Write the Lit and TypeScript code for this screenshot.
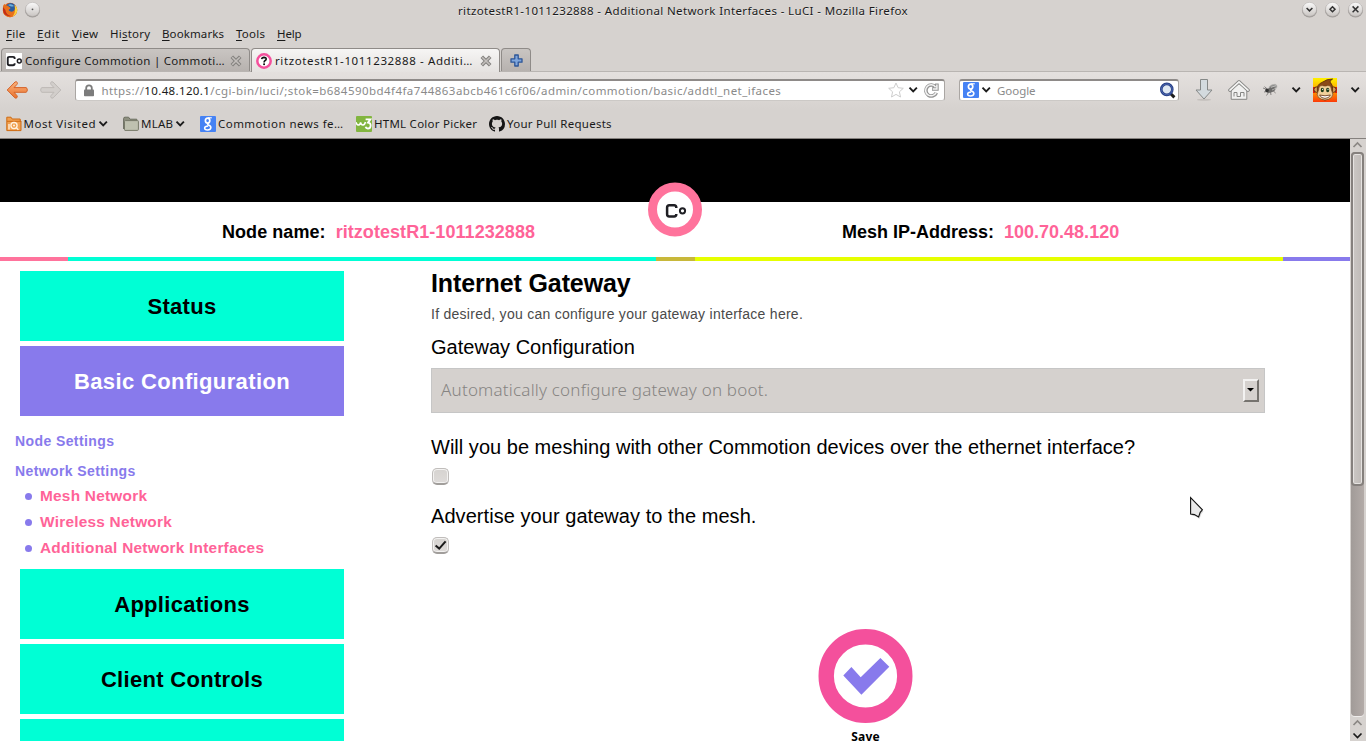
import { LitElement, html, css, svg } from "lit";
import { customElement } from "lit/decorators.js";

interface MenuEntry { before: string; key: string; after: string; width: number; spacing: number; }

const MENU: MenuEntry[] = [
  { before: "", key: "F", after: "ile", width: 31, spacing: 0.27 },
  { before: "", key: "E", after: "dit", width: 35, spacing: 0.6 },
  { before: "", key: "V", after: "iew", width: 38, spacing: 0.29 },
  { before: "Hi", key: "s", after: "tory", width: 52, spacing: 0.24 },
  { before: "", key: "B", after: "ookmarks", width: 74, spacing: 0.11 },
  { before: "", key: "T", after: "ools", width: 41, spacing: 0.26 },
  { before: "", key: "H", after: "elp", width: 30, spacing: -0.15 },
];

const chevron = html`<svg class="chev" width="11" height="8" viewBox="0 0 11 8">
  <path d="M1.5 1.7 L5.2 5.4 L8.9 1.7" fill="none" stroke="#1c1c1c" stroke-width="1.9"/></svg>`;

const closeX = html`<svg width="12" height="12" viewBox="0 0 12 12">
  <path d="M1.8 1.8 L10.2 10.2 M10.2 1.8 L1.8 10.2" stroke="#83817e" stroke-width="3.6"/>
  <path d="M2.2 2.2 L9.8 9.8 M9.8 2.2 L2.2 9.8" stroke="#c3bfbc" stroke-width="1.6"/></svg>`;

const logoMark = svg`
  <path d="M10.6 4.1 V3.6 Q10.6 1.4 8.4 1.4 H3.6 Q1.4 1.4 1.4 3.6 V10.4 Q1.4 12.6 3.6 12.6 H8.4 Q10.6 12.6 10.6 10.4 V10"
    fill="none" stroke="#1f1f24" stroke-width="2.5"/>
  <circle cx="16.8" cy="6.9" r="2.6" fill="none" stroke="#1f1f24" stroke-width="2"/>`;

const googleIcon = html`<svg width="16" height="16" viewBox="0 0 16 16">
  <rect width="16" height="16" rx="1" fill="#4582f4"/>
  <g fill="none" stroke="#fff">
    <ellipse cx="7.6" cy="4.6" rx="2.2" ry="2.5" stroke-width="1.7"/>
    <path d="M8 1.8 H11.8" stroke-width="1.1"/>
    <path d="M9 6.9 Q7 7.8 8 8.7 Q11 9.8 10.9 11.7 Q10.6 14 7.6 14 Q4.6 13.9 4.6 12 Q4.8 10 8.2 9.9" stroke-width="1.5"/>
  </g></svg>`;

const firefoxIcon = html`<svg width="16" height="17" viewBox="0 -1 16 17">
  <circle cx="8" cy="8" r="7.2" fill="#e2601a"/>
  <circle cx="8.8" cy="6.2" r="5.2" fill="#2b5e9e"/>
  <path d="M6 3 Q9 1 12 4 Q10 5 8 4 Z" fill="#6fb0dc"/>
  <path d="M1 4 L2.4 1.8 L3.4 3.6 Q6 3.4 7.2 5 Q9 5.4 8.2 6.8 Q6.4 7.2 6.8 8.6 Q9 10.6 11.6 9 Q13.6 7 12.6 3 Q16 6 15 10 Q13 15 8 15.2 Q2 15 0.9 9 Z" fill="#e8701c"/>
  <path d="M12.6 3 Q16 6 15 10 Q13.6 13.6 10.6 14.6 Q14 10.6 12.6 3 Z" fill="#fbd23c"/>
  <path d="M1 5 Q0.4 10 3 12.6 Q6 15 9 14 Q4 13 3.4 8 Z" fill="#c22e18"/></svg>`;

const roundButton = (glyph: unknown) => html`<svg width="17" height="17" viewBox="0 0 17 17">
  <defs><linearGradient id="rb" x1="0" y1="0" x2="0" y2="1">
    <stop offset="0" stop-color="#fafafa"/><stop offset="1" stop-color="#c9c5c2"/></linearGradient></defs>
  <circle cx="8.5" cy="9" r="7.6" fill="#8c8886" opacity=".75"/>
  <circle cx="8.5" cy="8.3" r="7" fill="url(#rb)" stroke="#b5b1ae" stroke-width=".5"/>${glyph}</svg>`;

@customElement("browser-chrome")
export class BrowserChrome extends LitElement {
  static styles = css`
    :host {
      display: block; height: 139px; box-sizing: border-box; background: #d6d2cf;
      font-family: "Noto Sans", sans-serif; font-size: 11.5px; color: #1a1a1a;
      border-bottom: 1px solid #85817e; white-space: nowrap;
    }
    svg { display: block; flex: none; }
    .title { display: grid; grid-template-columns: 1fr auto 1fr; height: 21px; line-height: 21px; }
    .title-left { display: flex; gap: 6px; padding: 1px 0 0 2px; align-items: flex-start; }
    .title-text { letter-spacing: .375px; text-shadow: 0 1px 0 #eceae8; }
    .title-right { display: flex; justify-content: flex-end; gap: 6px; padding: 1px 2px 0 0; }
    .menu { display: flex; height: 25px; line-height: 25px; padding: 0 0 2px 6px; }
    .menu u { text-underline-offset: 2px; text-decoration-thickness: 1px; }
    .tabs { display: flex; height: 23px; align-items: stretch; padding-left: 1px; border-bottom: 1px solid #b9b5b2; }
    .tab {
      display: flex; align-items: center; box-sizing: border-box; height: 23px; width: 249px;
      border: 1px solid #8f8b88; border-width: 1px 1.5px 0 1.5px; border-radius: 4px 4px 0 0;
      background: linear-gradient(#c9c5c2, #b7b2af); padding: 1px 7px 0 4px; line-height: 22px;
    }
    .tab.active { background: linear-gradient(#f6f5f4, #e5e2e0); height: 24px; margin-left: 1px; }
    .tab .label { flex: 1; margin-left: 3px; letter-spacing: .28px; }
    .tab.active .label { letter-spacing: .62px; }
    .tab.add { width: 30px; justify-content: center; padding: 0; margin-left: 1px; }
    .tools {
      display: flex; align-items: center; box-sizing: border-box; height: 37px; padding: 0 5px 2px 6px;
      background: linear-gradient(#e4e0de, #d6d2cf);
    }
    .tools > * { margin-left: var(--gap, 0); }
    .g11 { --gap: 11px; } .g12 { --gap: 12px; } .g13 { --gap: 13px; } .g14 { --gap: 14px; } .g15 { --gap: 15px; }
    .field {
      display: flex; align-items: center; box-sizing: border-box; height: 22px; background: #fff; flex: none;
      border: 1px solid #aaa6a3; border-top: 2px solid #8e8a88; border-bottom-color: #ccc9c6;
      border-radius: 3px; color: #8a8a8a; line-height: 19px;
    }
    .url { width: 870px; padding: 0 3px 0 8px; }
    .url .addr { flex: 1; margin-left: 7.5px; letter-spacing: .445px; }
    .url .scheme { letter-spacing: .4px; }
    .url .host { color: #1a1a1a; letter-spacing: .36px; }
    .url .star { margin-right: 4px; } .url .reload { margin-left: 4px; }
    .url .star { margin-left: -1px; }
    .search { width: 220px; padding: 0 2px 0 3px; }
    .search .chev { margin-left: 2px; }
    .search .ph { flex: 1; margin-left: 5px; letter-spacing: -.05px; }
    .marks { display: flex; height: 29px; align-items: center; padding-left: 6px; line-height: 29px; }
    .mark { display: flex; align-items: center; }
    .mark .text { margin: 0 2px 0 2px; }
    .m1 { width: 117px; } .m1 .text { letter-spacing: .54px; margin-left: 1.5px; }
    .m2 { width: 77px; } .m2 .text { letter-spacing: .23px; margin-left: 2px; }
    .m3 { width: 156px; } .m3 .text { letter-spacing: .46px; }
    .m4 { width: 133px; } .m4 .text { letter-spacing: .25px; }
    .m5 .text { letter-spacing: .26px; }
  `;

  private folder(visited: boolean) {
    return visited
      ? html`<svg width="16" height="16" viewBox="0 0 16 16">
          <path d="M.8 14.6 V1.2 H5 L6.2 3 H14.2 V5 H15 V14.6 Z" fill="#f0a050" stroke="#cf6a12"/>
          <path d="M1 5.3 H15" stroke="#cf6a12"/>
          <circle cx="8" cy="9.6" r="3.1" fill="none" stroke="#fff3e2" stroke-width="1.3"/>
          <circle cx="8" cy="9.6" r="1" fill="#fff3e2"/>
          <path d="M10.2 11.6 L12.4 13.8 M3 13.5 V8" stroke="#fff3e2" stroke-width="1.3"/></svg>`
      : html`<svg width="16" height="16" viewBox="0 0 16 16">
          <path d="M.6 13 V2.6 Q.6 1.2 2 1.2 H5.6 L7 3.2 H13.8 V5" fill="#8e9080" stroke="#6c6e60"/>
          <path d="M2 14.4 Q1.5 14.4 1.5 13.6 V5.4 Q1.5 4.6 2.4 4.6 H14.6 Q15.4 4.6 15.4 5.4 V13.4 Q15.4 14.4 14.4 14.4 Z" fill="#bfc1b0" stroke="#777969"/></svg>`;
  }

  render() {
    return html`
      <div class="title">
        <div class="title-left">${firefoxIcon}${roundButton(svg`<circle cx="8.5" cy="8.3" r=".9" fill="#555"/>`)}</div>
        <div class="title-text">ritzotestR1-1011232888 - Additional Network Interfaces - LuCI - Mozilla Firefox</div>
        <div class="title-right">
          ${roundButton(svg`<path d="M5.6 7 L8.5 9.9 L11.4 7" fill="none" stroke="#333" stroke-width="1.5"/>`)}
          ${roundButton(svg`<path d="M8.5 5.8 L11 8.3 L8.5 10.8 L6 8.3 Z" fill="none" stroke="#333" stroke-width="1.5"/>`)}
          ${roundButton(svg`<path d="M5.6 5.4 L11.4 11.2 M11.4 5.4 L5.6 11.2" stroke="#333" stroke-width="1.5"/>`)}
        </div>
      </div>
      <div class="menu">
        ${MENU.map((m) => html`<span style="width:${m.width}px;letter-spacing:${m.spacing}px">${m.before}<u>${m.key}</u>${m.after}</span>`)}
      </div>
      <div class="tabs">
        <div class="tab">
          <svg width="16" height="16" viewBox="0 0 16 16"><rect width="16" height="16" fill="#fff"/>
            <g transform="translate(.7 2.8) scale(.75 .75)">${logoMark}</g></svg>
          <span class="label">Configure Commotion | Commoti…</span>${closeX}
        </div>
        <div class="tab active">
          <svg width="16" height="16" viewBox="0 0 16 16"><circle cx="8" cy="8" r="6.7" fill="#fff" stroke="#f4509c" stroke-width="2.5"/>
            <path d="M5.7 6.2 Q5.9 4.4 8 4.4 Q10.3 4.5 10.2 6.2 Q10.1 7.2 8.9 7.8 Q8.1 8.3 8.1 9.4" fill="none" stroke="#111" stroke-width="1.6"/>
            <rect x="7.2" y="10.4" width="1.8" height="1.7" fill="#111"/></svg>
          <span class="label">ritzotestR1-1011232888 - Additi…</span>${closeX}
        </div>
        <div class="tab add">
          <svg width="13" height="13" viewBox="0 0 13 13">
            <path d="M4.8 1 H8.2 V4.8 H12 V8.2 H8.2 V12 H4.8 V8.2 H1 V4.8 H4.8 Z" fill="#7fa6dc" stroke="#2d5597" stroke-width="1.3" stroke-linejoin="round"/></svg>
        </div>
      </div>
      <div class="tools">
        <svg width="22" height="20" viewBox="0 0 22 20">
          <defs><linearGradient id="bk" x1="0" y1="0" x2="0" y2="1"><stop offset="0" stop-color="#fbb27c"/><stop offset="1" stop-color="#e9722d"/></linearGradient></defs>
          <path d="M1.2 10 L9 2 Q10.4 1.2 11.2 2.4 Q11.8 3.6 10.8 4.6 L8 7.6 H20 Q21.3 7.8 21.3 10 Q21.3 12 20 12.3 H8 L10.8 15.4 Q11.8 16.4 11 17.6 Q10 18.7 8.8 17.8 Z" fill="url(#bk)" stroke="#d4632a" stroke-linejoin="round"/></svg>
        <svg class="g12" width="22" height="20" viewBox="0 0 22 20">
          <path d="M20.8 10 L13 2 Q11.6 1.2 10.8 2.4 Q10.2 3.6 11.2 4.6 L14 7.6 H2 Q.7 7.8 .7 10 Q.7 12 2 12.3 H14 L11.2 15.4 Q10.2 16.4 11 17.6 Q12 18.7 13.2 17.8 Z" fill="#d2cecb" stroke="#bdb9b6" stroke-linejoin="round"/></svg>
        <div class="field url g13">
          <svg width="10" height="13" viewBox="0 0 10 13">
            <path d="M2.2 7 V4 Q2.2 1.3 5 1.3 Q7.8 1.3 7.8 4 V7" fill="none" stroke="#7c7c7c" stroke-width="1.8"/>
            <rect x="0" y="5.6" width="10" height="6.6" rx=".8" fill="#7c7c7c"/></svg>
          <span class="addr"><span class="scheme">https://</span><span class="host">10.48.120.1</span>/cgi-bin/luci/;stok=b684590bd4f4fa744863abcb461c6f06/admin/commotion/basic/addtl_net_ifaces</span>
          <svg class="star" width="16" height="16" viewBox="0 0 16 16">
            <path d="M8 1 L10.1 5.7 L15.3 6.3 L11.4 9.8 L12.5 15 L8 12.4 L3.5 15 L4.6 9.8 L.7 6.3 L5.9 5.7 Z" fill="#fff" stroke="#cdcdcd"/></svg>
          ${chevron}
          <svg class="reload" width="18" height="17" viewBox="0 0 18 17">
            <g fill="none"><path d="M12.6 5 A5.5 5.5 0 1 0 13.4 10.8 M9 7 H13.9 V1.6" stroke="#949494" stroke-width="3.6"/>
            <path d="M12.6 5.2 A5.5 5.5 0 1 0 13.1 10.6 M9.7 7 H13.9 V2.4" stroke="#f4f4f4" stroke-width="1.5"/></g></svg>
        </div>
        <div class="field search g14">
          ${googleIcon}${chevron}<span class="ph">Google</span>
          <svg width="17" height="17" viewBox="0 0 17 17">
            <path d="M11 11 L15.4 15.4" stroke="#1d1d1d" stroke-width="3"/>
            <circle cx="7.8" cy="7.4" r="5.5" fill="#dfe8f2" stroke="#263f86" stroke-width="2.6"/>
            <circle cx="7.8" cy="7.4" r="5.4" fill="none" stroke="#5b76bd" stroke-width=".7"/></svg>
        </div>
        <svg class="g15" width="20" height="24" viewBox="0 0 20 24">
          <ellipse cx="10" cy="21.8" rx="7" ry="1" fill="#c4c0bd"/>
          <path d="M6.5 1.5 H13.5 V12 H18 L10 21 L2 12 H6.5 Z" fill="#d3dade" stroke="#858887" stroke-linejoin="round"/></svg>
        <svg class="g14" width="22" height="22" viewBox="0 0 22 22">
          <path d="M3.2 11 V20.3 H18.8 V11 L11 4.6 Z" fill="#f1f1f0" stroke="#868684"/>
          <path d="M1.9 11.2 L11 2.8 L20.1 11.2" fill="none" stroke="#868684" stroke-width="3.4" stroke-linejoin="round" stroke-linecap="round"/>
          <path d="M2 11.1 L11 2.9 L20 11.1" fill="none" stroke="#f4f4f3" stroke-width="1.7" stroke-linecap="round"/>
          <path d="M6 17.5 V13.5 H9 V17.5 H12.5 V13.5 H16 V17.5" fill="none" stroke="#868684"/></svg>
        <svg class="g12" width="16" height="16" viewBox="0 0 16 16">
          <path d="M1 6 L5 7.5 M2 10 L5 9.5 M4.5 13.5 L6.5 10.5 M9 13 L8.5 10 M13.6 11 L11 8.6 M2.5 4.6 L4.8 6.6" stroke="#6d6b69" stroke-width=".8"/>
          <ellipse cx="11" cy="5.2" rx="4.2" ry="2.6" transform="rotate(-22 11 5.2)" fill="#8f8f8e" stroke="#b4b2b0" stroke-width=".6"/>
          <ellipse cx="8.8" cy="8" rx="4.8" ry="2.4" transform="rotate(-22 8.8 8)" fill="#6b6a69"/>
          <circle cx="5" cy="8.4" r="1.8" fill="#333"/>
          <path d="M9 5.4 L14 3.6 M10 8 L14.4 6" stroke="#d0cecc" stroke-width=".7"/></svg>
        <span class="g13">${chevron}</span>
        <svg class="g11" width="24" height="24" viewBox="0 0 24 24">
          <defs><linearGradient id="mk" x1="0" y1="0" x2="0" y2="1"><stop offset="0" stop-color="#fff200"/><stop offset=".5" stop-color="#ffa400"/><stop offset="1" stop-color="#fb3a08"/></linearGradient></defs>
          <rect width="24" height="24" fill="url(#mk)"/>
          <path d="M0 9 H2 V15 H0 Z M22 9 H24 V15 H22 Z" fill="#e01c08"/>
          <circle cx="3.6" cy="11.6" r="2.7" fill="#d79a58" stroke="#5c2c0c"/><circle cx="20.4" cy="11.6" r="2.7" fill="#d79a58" stroke="#5c2c0c"/>
          <path d="M4.4 12 Q3.6 6.6 9 4.4 Q14 .8 19.6 1 Q17 2.4 17 4 Q20 6.6 19.6 12 Q20 21.6 12 21.8 Q4 21.6 4.4 12 Z" fill="#8b4a18" stroke="#54280a" stroke-width=".8"/>
          <path d="M5.6 12 Q5.8 7.2 9.4 7.6 Q12 8.6 14.6 7.6 Q18.2 7.2 18.4 12 Q21.2 16.6 18.6 19.4 Q12 24.6 5.4 19.4 Q2.8 16.6 5.6 12 Z" fill="#f0d09a" stroke="#6a3810" stroke-width=".6"/>
          <ellipse cx="9.3" cy="12" rx="1.6" ry="2.2" fill="#1c3a18"/><ellipse cx="14.7" cy="12" rx="1.6" ry="2.2" fill="#1c3a18"/>
          <circle cx="9.6" cy="11.3" r=".6" fill="#fff"/><circle cx="15" cy="11.3" r=".6" fill="#fff"/>
          <path d="M6.6 17 Q12 18.6 17.4 17 Q16 20.4 12 20.4 Q8 20.4 6.6 17 Z" fill="#fff" stroke="#5c2c0c" stroke-width=".8"/></svg>
        <span class="g13">${chevron}</span>
      </div>
      <div class="marks">
        <div class="mark m1">${this.folder(true)}<span class="text">Most Visited</span>${chevron}</div>
        <div class="mark m2">${this.folder(false)}<span class="text">MLAB</span>${chevron}</div>
        <div class="mark m3">${googleIcon}<span class="text">Commotion news fe…</span></div>
        <div class="mark m4">
          <svg width="16" height="16" viewBox="0 0 16 16"><rect width="16" height="16" rx="1" fill="#82b53f"/>
            <path d="M0 6.2 Q.8 9.2 2.6 9 Q4.4 8.8 4.6 6.4 Q5.2 9.2 7 9 Q8.8 8.8 9.4 6" fill="none" stroke="#fff" stroke-width="1.5"/>
            <path d="M9.6 3.4 H14.4 L12 6.6 Q14.9 7 14.6 9.8 Q14.3 12.6 11.8 12.5 Q10 12.4 9.6 10.8" fill="none" stroke="#fff" stroke-width="1.8"/></svg>
          <span class="text">HTML Color Picker</span></div>
        <div class="mark m5">
          <svg width="16" height="16" viewBox="0 0 16 16"><path fill="#151515" d="M8 0C3.58 0 0 3.58 0 8c0 3.54 2.29 6.53 5.47 7.59.4.07.55-.17.55-.38 0-.19-.01-.82-.01-1.49-2.01.37-2.53-.49-2.69-.94-.09-.23-.48-.94-.82-1.13-.28-.15-.68-.52-.01-.53.63-.01 1.08.58 1.23.82.72 1.21 1.87.87 2.33.66.07-.52.28-.87.51-1.07-1.78-.2-3.64-.89-3.64-3.95 0-.87.31-1.59.82-2.15-.08-.2-.36-1.02.08-2.12 0 0 .67-.21 2.2.82.64-.18 1.32-.27 2-.27s1.36.09 2 .27c1.53-1.04 2.2-.82 2.2-.82.44 1.1.16 1.92.08 2.12.51.56.82 1.27.82 2.15 0 3.07-1.87 3.75-3.65 3.95.29.25.54.73.54 1.48 0 1.07-.01 1.93-.01 2.2 0 .21.15.46.55.38A8.01 8.01 0 0 0 16 8c0-4.42-3.58-8-8-8z"/></svg>
          <span class="text">Your Pull Requests</span></div>
      </div>`;
  }
}

@customElement("mesh-page")
export class MeshPage extends LitElement {
  static styles = css`
    :host {
      display: block; position: relative; height: 602px; overflow: hidden; background: #fff;
      font-family: "Liberation Sans", Arial, sans-serif; color: #000; white-space: nowrap;
    }
    svg { display: block; }
    .banner { height: 63px; background: #000; }
    .info { display: grid; grid-template-columns: 842px 1fr; height: 55px; font: bold 18px/61px "Liberation Sans", Arial, sans-serif; }
    .pair { display: flex; gap: 10px; }
    .pair.node { padding-left: 222px; letter-spacing: .06px; }
    .pair em { font-style: normal; color: #ff6398; }
    .logo { position: absolute; left: 648px; top: 43px; }
    .stripe { display: grid; grid-template-columns: 68px 588px 39px 588px 1fr; height: 4px; }
    .s1 { background: #ff739c; } .s2 { background: #00ffd5; } .s3 { background: #c8b83a; }
    .s4 { background: #e6ff00; } .s5 { background: #887aec; }
    .body { display: grid; grid-template-columns: 344px 1fr; column-gap: 87px; }
    .side { padding: 10px 0 0 20px; }
    .btn { height: 70px; margin-bottom: 5px; background: #00ffd5; text-align: center; font: bold 22px/71px "Liberation Sans", Arial, sans-serif; letter-spacing: .3px; }
    .btn.on { background: #887aec; color: #fff; letter-spacing: .37px; margin-bottom: 10px; }
    .group { margin-left: -5px; font-weight: bold; font-size: 14px; line-height: 30px; color: #887aec; letter-spacing: .4px; }
    .list { list-style: none; margin: -3px 0 8px; padding: 0 0 0 5px; font-weight: bold; font-size: 15.4px; line-height: 26px; color: #ff6398; letter-spacing: .24px; }
    .list li { display: flex; align-items: center; gap: 8px; }
    .list li::before { content: ""; width: 7px; height: 7px; border-radius: 50%; background: #887aec; }
    .main { padding-top: 7px; width: 869px; }
    h2 { margin: 0 0 6px; font-size: 25px; line-height: 30px; letter-spacing: -.12px; }
    .hint { font-size: 14px; line-height: 20px; color: #4a4a4a; letter-spacing: .27px; }
    .q { font-size: 20px; line-height: 24px; letter-spacing: .02px; }
    .q.first { margin: 11px 0 9px; } .q.second { margin: 22px 0 9px; } .q.third { margin: 19px 0 9px; letter-spacing: .055px; }
    .select {
      display: flex; align-items: center; justify-content: space-between; box-sizing: border-box; width: 834px; height: 45px;
      padding: 0 5px 0 9px; border: 1px solid #c6c6c6; background: #d5d1ce; color: #868482;
      font-family: "Noto Sans", sans-serif; font-weight: 300; font-size: 17px; letter-spacing: .21px;
    }
    .select span { line-height: 41px; padding-bottom: 2px; }
    .drop {
      display: flex; align-items: center; justify-content: center; box-sizing: border-box; width: 16px; height: 23px; padding: 0 1px 1px 0;
      border: 2px solid; border-color: #f3f2f1 #76736f #76736f #f3f2f1; background: #d5d1ce;
    }
    .drop svg { flex: none; }
    .box {
      display: flex; align-items: center; justify-content: center; box-sizing: border-box; width: 17px; height: 17px; margin: 0 0 1px 1px;
      border: 1px solid #c0bdbb; border-bottom: 2px solid #a19e9b; border-radius: 5px;
      box-shadow: inset 0 0 0 1px #f3f2f1; background: linear-gradient(#d6d3d0, #dedbd9);
    }
    .box svg { flex: none; }
    .save { display: flex; flex-direction: column; align-items: center; margin-top: 75px; font: bold 12px/16px "Noto Sans", sans-serif; letter-spacing: .2px; }
    .save svg { margin-bottom: 5px; }
  `;

  render() {
    return html`
      <div class="banner"></div>
      <div class="info">
        <div class="pair node"><span>Node name:</span><em>ritzotestR1-1011232888</em></div>
        <div class="pair"><span>Mesh IP-Address:</span><em>100.70.48.120</em></div>
      </div>
      <svg class="logo" width="54" height="55" viewBox="0 0 54 55">
        <circle cx="27" cy="27.5" r="22.5" fill="#fff" stroke="#ff739c" stroke-width="9"/>
        <g transform="translate(17.7 21.9)">${logoMark}</g></svg>
      <div class="stripe"><i class="s1"></i><i class="s2"></i><i class="s3"></i><i class="s4"></i><i class="s5"></i></div>
      <div class="body">
        <nav class="side">
          <div class="btn">Status</div>
          <div class="btn on">Basic Configuration</div>
          <div class="group">Node Settings</div>
          <div class="group">Network Settings</div>
          <ul class="list"><li>Mesh Network</li><li>Wireless Network</li><li>Additional Network Interfaces</li></ul>
          <div class="btn">Applications</div>
          <div class="btn">Client Controls</div>
          <div class="btn"></div>
        </nav>
        <div class="main">
          <h2>Internet Gateway</h2>
          <div class="hint">If desired, you can configure your gateway interface here.</div>
          <div class="q first">Gateway Configuration</div>
          <div class="select"><span>Automatically configure gateway on boot.</span>
            <div class="drop"><svg width="7" height="4" viewBox="0 0 7 4"><path d="M0 0 H7 L3.5 3.6 Z" fill="#000"/></svg></div></div>
          <div class="q second">Will you be meshing with other Commotion devices over the ethernet interface?</div>
          <div class="box"></div>
          <div class="q third">Advertise your gateway to the mesh.</div>
          <div class="box"><svg width="13" height="12" viewBox="0 0 13 12"><path d="M1.6 6.4 L5.2 9.6 L11.6 2.4" fill="none" stroke="#1a1a1a" stroke-width="2"/></svg></div>
          <div class="save">
            <svg width="95" height="95" viewBox="0 0 95 95">
              <circle cx="47.5" cy="47" r="39.3" fill="#fff" stroke="#f4509c" stroke-width="15.4"/>
              <path d="M25.3 46.4 L33.4 38 L42.7 48.3 L62.4 29 L71.3 37.7 L43.4 65.7 Z" fill="#887aec"/></svg>
            <span>Save</span>
          </div>
        </div>
      </div>`;
  }
}

@customElement("page-scrollbar")
export class PageScrollbar extends LitElement {
  static styles = css`
    :host { display: flex; flex-direction: column; align-items: center; width: 16px; height: 602px; background: #d6d2cf; }
    svg { display: block; flex: none; }
    .track { box-sizing: border-box; width: 13px; height: 564px; margin: 1px 2px 1px 0; border-radius: 4px; background: linear-gradient(90deg, #a19b98, #b3aba8); box-shadow: 0 1px 0 #efedec; }
    .thumb { box-sizing: border-box; height: 334px; border: 2px solid #85807d; border-radius: 4px; background: linear-gradient(90deg, #cbc7c4, #bfbab7); box-shadow: inset 0 0 0 1px #e6e3e1; }
  `;
  private arrow(up: boolean, color: string) {
    return html`<svg width="16" height="12" viewBox="0 0 16 12">
      <path d="${up ? "M3.5 8 L7.5 4 L11.5 8" : "M3.5 4.5 L7.5 8.5 L11.5 4.5"}" fill="none" stroke="${color}" stroke-width="1.7"/></svg>`;
  }
  render() {
    return html`${this.arrow(true, "#8b8784")}
      <div class="track"><div class="thumb"></div></div>
      ${this.arrow(true, "#8b8784")}${this.arrow(false, "#1a1a1a")}`;
  }
}

@customElement("app-root")
export class AppRoot extends LitElement {
  static styles = css`
    :host { display: block; position: relative; width: 1366px; height: 741px; overflow: hidden; }
    .view { display: grid; grid-template-columns: 1350px 16px; }
    .cursor { position: absolute; left: 1188px; top: 495px; }
  `;
  render() {
    return html`
      <browser-chrome></browser-chrome>
      <div class="view"><mesh-page></mesh-page><page-scrollbar></page-scrollbar></div>
      <svg class="cursor" width="18" height="26" viewBox="0 0 18 26">
        <path d="M3.5 4.5 V20.5 L8 21.5 L11.5 24 L13.5 18.5 L15.5 16.5 Z" fill="#000" opacity=".15"/>
        <path d="M2.6 2.6 V19 L6.4 19.6 L10.6 22 L12.2 17.4 L14.4 14.8 Z" fill="#e9e9e9" stroke="#111" stroke-width="1.1"/></svg>`;
  }
}
